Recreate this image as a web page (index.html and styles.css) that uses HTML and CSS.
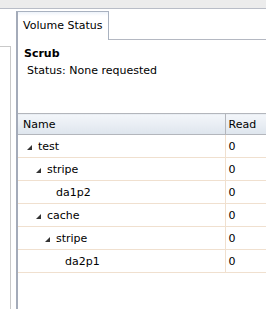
FILE: index.html
```html
<!DOCTYPE html>
<html lang="en">
<head>
    <meta charset="UTF-8">
    <title>Volume Status</title>
    <link rel="stylesheet" href="styles.css">
</head>
<body>
    <div class="top-bar"></div>
    <div class="layout">
        <div class="side-pane"></div>
        <div class="main-pane">
            <div class="tab-strip">
                <div class="tab active">Volume Status</div>
                <div class="tab-fill"></div>
            </div>
            <div class="panel">
                <div class="section">
                    <div class="section-title">Scrub</div>
                    <div class="section-status">Status: None requested</div>
                </div>
                <table class="tree-table">
                    <tr class="head">
                        <th class="col-name">Name</th>
                        <th class="col-read">Read</th>
                    </tr>
                    <tr>
                        <td class="col-name"><span class="indent lvl0"></span><span class="twisty open"></span>test</td>
                        <td class="col-read">0</td>
                    </tr>
                    <tr>
                        <td class="col-name"><span class="indent lvl1"></span><span class="twisty open"></span>stripe</td>
                        <td class="col-read">0</td>
                    </tr>
                    <tr>
                        <td class="col-name"><span class="indent lvl2"></span><span class="twisty"></span>da1p2</td>
                        <td class="col-read">0</td>
                    </tr>
                    <tr>
                        <td class="col-name"><span class="indent lvl1"></span><span class="twisty open"></span>cache</td>
                        <td class="col-read">0</td>
                    </tr>
                    <tr>
                        <td class="col-name"><span class="indent lvl2"></span><span class="twisty open"></span>stripe</td>
                        <td class="col-read">0</td>
                    </tr>
                    <tr>
                        <td class="col-name"><span class="indent lvl3"></span><span class="twisty"></span>da2p1</td>
                        <td class="col-read">0</td>
                    </tr>
                </table>
            </div>
        </div>
    </div>
</body>
</html>
```

FILE: styles.css
```css
html, body {
    margin: 0;
    height: 100%;
    overflow: hidden;
    background: #fff;
    font-family: "DejaVu Sans", Verdana, sans-serif;
    font-size: 11px;
    color: #000;
}

.top-bar {
    height: 8px;
    background: #ececec;
    border-bottom: 1px solid #b9bdc7;
}

.layout {
    display: flex;
    height: 300px;
}

.side-pane {
    width: 11px;
    margin-top: 37px;
    border-top: 1px solid #c9c9c9;
    border-right: 1px solid #c9c9c9;
    box-sizing: border-box;
}

.main-pane {
    flex: 1;
    margin-left: 5px;
    padding-top: 2px;
    display: flex;
    flex-direction: column;
    min-width: 0;
}

.tab-strip {
    display: flex;
    height: 29px;
}

.tab {
    width: 93px;
    padding-left: 5px;
    box-sizing: border-box;
    border-top: 1px solid #a9b2c0;
    border-right: 1px solid #a9b2c0;
    border-left: 2px solid #a4abb9;
    line-height: 28px;
    background: linear-gradient(#eef3fa, #fff 4px);
    white-space: nowrap;
}

.tab-fill {
    flex: 1;
    border-bottom: 1px solid #b4b8c2;
}

.panel {
    flex: 1;
    border-left: 2px solid #a4abb9;
}

.section {
    padding: 7px 0 0 6px;
    height: 73px;
    box-sizing: border-box;
}

.section-title {
    font-weight: bold;
    line-height: 14px;
}

.section-status {
    padding-left: 3px;
    margin-top: 3px;
    line-height: 14px;
}

.tree-table {
    border-collapse: collapse;
    width: 260px;
    table-layout: fixed;
}

.tree-table th {
    height: 20px;
    padding: 0 0 0 5px;
    box-sizing: border-box;
    text-align: left;
    font-weight: normal;
    background: linear-gradient(#f3f6fa, #dee5ed);
    border-top: 1px solid #b3b6bc;
    border-bottom: 1px solid #b3b6bc;
}

.tree-table th.col-read {
    border-left: 1px solid #b3b6bc;
    padding-left: 3px;
}

.tree-table tr {
    height: 23px;
}

.tree-table tr.head {
    height: 21px;
}

.tree-table td {
    padding: 0;
    border-bottom: 1px solid #f0e0cf;
    white-space: nowrap;
}

.tree-table td.col-name {
    padding-left: 9px;
}

.tree-table td.col-read {
    border-left: 1px solid #f0e0cf;
    padding-left: 3px;
}

.col-name {
    width: 207px;
}

.indent {
    display: inline-block;
}

.lvl0 { width: 0; }
.lvl1 { width: 9px; }
.lvl2 { width: 18px; }
.lvl3 { width: 27px; }

.twisty {
    display: inline-block;
    width: 11px;
    height: 5px;
    position: relative;
}

.twisty.open::before {
    content: "";
    position: absolute;
    left: 0;
    top: 0;
    border-left: 5px solid transparent;
    border-bottom: 5px solid #333;
}
```
